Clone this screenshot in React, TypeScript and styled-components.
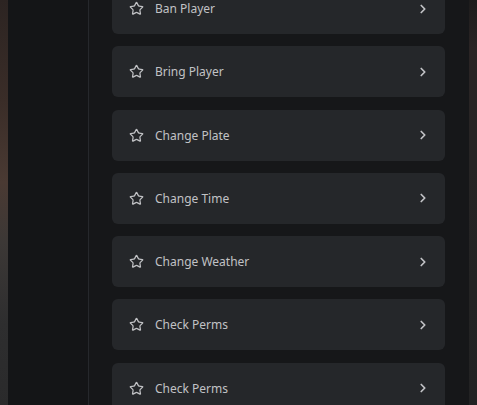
import React from "react";
import styled, { createGlobalStyle } from "styled-components";
import { Star, ChevronRight } from "lucide-react";

const GlobalStyle = createGlobalStyle`
    html, body {
        margin: 0;
        padding: 0;
        background: #141517;
        overflow: hidden;
    }
`;

const commands: string[] = [
    "Ban Player",
    "Bring Player",
    "Change Plate",
    "Change Time",
    "Change Weather",
    "Check Perms",
    "Check Perms",
];

export default function App() {
    return (
        <>
            <GlobalStyle />
            <Screen>
                <Backdrop $side="left" />
                <Sidebar />
                <Main>
                    <CommandList>
                        {commands.map((label, index) => (
                            <CommandCard key={index}>
                                <CardLeft>
                                    <Star size={15} strokeWidth={2} />
                                    <Label>{label}</Label>
                                </CardLeft>
                                <ChevronRight size={14} strokeWidth={3} />
                            </CommandCard>
                        ))}
                    </CommandList>
                </Main>
                <Backdrop $side="right" />
            </Screen>
        </>
    );
}

const Screen = styled.div`
    display: flex;
    width: 477px;
    height: 405px;
    overflow: hidden;
    font-family: "Noto Sans", "Open Sans", sans-serif;
`;

const Backdrop = styled.div<{ $side: "left" | "right" }>`
    width: 8px;
    flex-shrink: 0;
    background: ${({ $side }) =>
        $side === "left"
            ? "linear-gradient(180deg, #2c2422 0%, #3a2d28 25%, #4a3a33 45%, #3c3836 60%, #2e2e2f 80%, #2a2a2b 100%)"
            : "linear-gradient(180deg, #1d1c1c 0%, #2a2424 12%, #262424 40%, #232323 70%, #222223 100%)"};
`;

const Sidebar = styled.div`
    width: 80px;
    flex-shrink: 0;
    background: #141517;
    border-right: 1px solid #26282c;
`;

const Main = styled.div`
    flex: 1;
    background: #161719;
    padding-left: 23px;
    overflow: hidden;
`;

const CommandList = styled.div`
    display: flex;
    flex-direction: column;
    gap: 12.3px;
    width: 333px;
    margin-top: -17px;
`;

const CommandCard = styled.div`
    display: flex;
    align-items: center;
    justify-content: space-between;
    height: 51px;
    flex-shrink: 0;
    padding: 0 15px 0 17px;
    box-sizing: border-box;
    background: #25272a;
    border-radius: 6px;
    color: #c1c2c5;
`;

const CardLeft = styled.div`
    display: flex;
    align-items: center;
    gap: 11px;
`;

const Label = styled.span`
    font-size: 12px;
    color: #c1c2c5;
`;
